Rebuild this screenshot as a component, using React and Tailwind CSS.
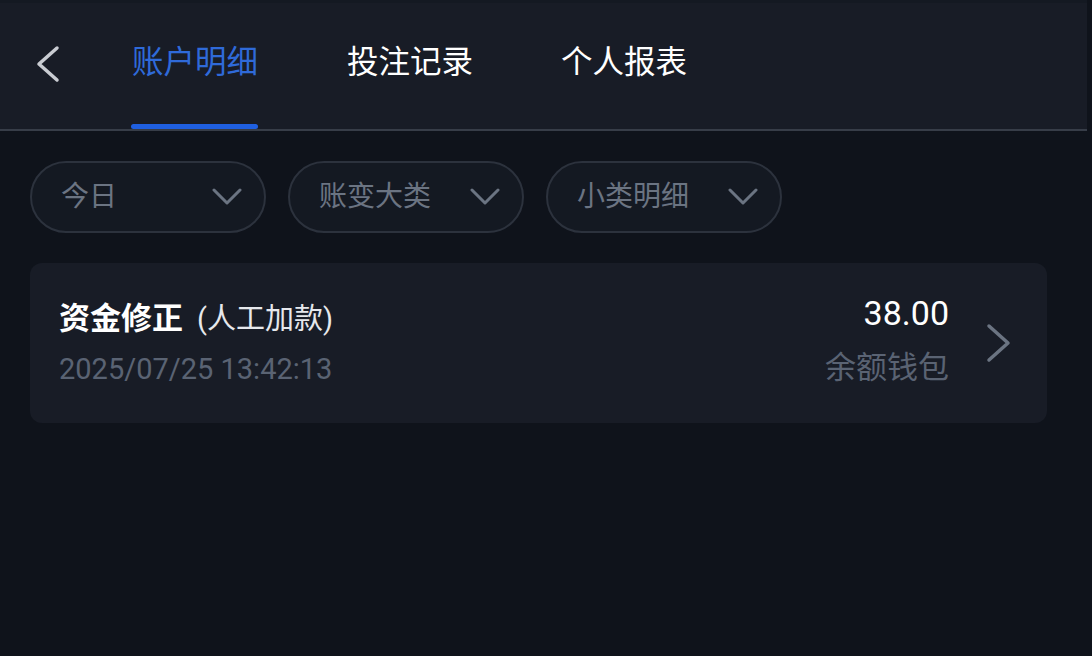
import React from 'react';

const tabs = ['账户明细', '投注记录', '个人报表'];
const filters = ['今日', '账变大类', '小类明细'];

const ChevronDown = () => (
  <svg width="30" height="18" viewBox="0 0 30 18" fill="none" stroke="currentColor" strokeWidth="3" strokeLinecap="round" strokeLinejoin="round">
    <path d="M2 2 L15 15 L28 2" />
  </svg>
);

export default function App() {
  return (
    <div
      className="w-[1092px] h-[656px] bg-[#0f131b] overflow-hidden"
      style={{ fontFamily: "Roboto, 'Noto Sans CJK SC', sans-serif" }}
    >
      {/* Header */}
      <div className="w-[1087px] h-[131px] bg-[#181c26] border-b-2 border-[#373d48] border-t-[3px] border-t-[#141922] flex items-stretch relative">
        <div className="w-[132px] flex items-center pl-[35px] pb-[4px]">
          <svg width="26" height="38" viewBox="0 0 26 38" fill="none" stroke="#c9ccd2" strokeWidth="3.5" strokeLinecap="round" strokeLinejoin="round">
            <path d="M22 3 L4 19 L22 35" />
          </svg>
        </div>
        {tabs.map((t, i) => (
          <div key={t} className={`relative flex items-center ${i === 0 ? 'w-[215px]' : i === 1 ? 'w-[214px]' : ''}`}>
            <span className={`text-[31.5px] leading-none pb-[6px] ${i === 0 ? 'text-[#2f6ad9]' : 'text-white'}`}>{t}</span>
            {i === 0 && (
              <div className="absolute left-[-1px] bottom-0 w-[127px] h-[5px] rounded-full bg-[#1f5fe0]" />
            )}
          </div>
        ))}
      </div>

      {/* Filters */}
      <div className="flex gap-[22px] px-[30px] pt-[30px]">
        {filters.map((f) => (
          <div
            key={f}
            className="w-[236px] h-[72px] rounded-full border-2 border-[#2c323d] bg-[#141922] flex items-center justify-between pl-[29px] pr-[22px] text-[#6b7482]"
          >
            <span className="text-[28px] leading-none">{f}</span>
            <ChevronDown />
          </div>
        ))}
      </div>

      {/* Record card */}
      <div className="mx-[30px] mt-[30px] w-[1017px] h-[160px] rounded-[12px] bg-[#181c26] flex items-center pl-[29px] pr-[34px]">
        <div className="flex-1 flex flex-col">
          <div className="flex items-baseline">
            <span className="text-[31px] font-bold text-white leading-none">资金修正</span>
            <span className="text-[29px] text-[#e6e8ec] leading-none ml-[14px]">(人工加款)</span>
          </div>
          <span className="text-[29px] text-[#5a6373] leading-none mt-[21px]">2025/07/25 13:42:13</span>
        </div>
        <div className="flex flex-col items-end pb-[8px]">
          <span className="text-[34px] text-white leading-none">38.00</span>
          <span className="text-[31px] text-[#5a6373] leading-none mt-[22px]">余额钱包</span>
        </div>
        <div className="ml-[36px]">
          <svg width="28" height="40" viewBox="0 0 28 40" fill="none" stroke="#6b7482" strokeWidth="3.5" strokeLinecap="round" strokeLinejoin="round">
            <path d="M4 3 L23 20 L4 37" />
          </svg>
        </div>
      </div>
    </div>
  );
}
